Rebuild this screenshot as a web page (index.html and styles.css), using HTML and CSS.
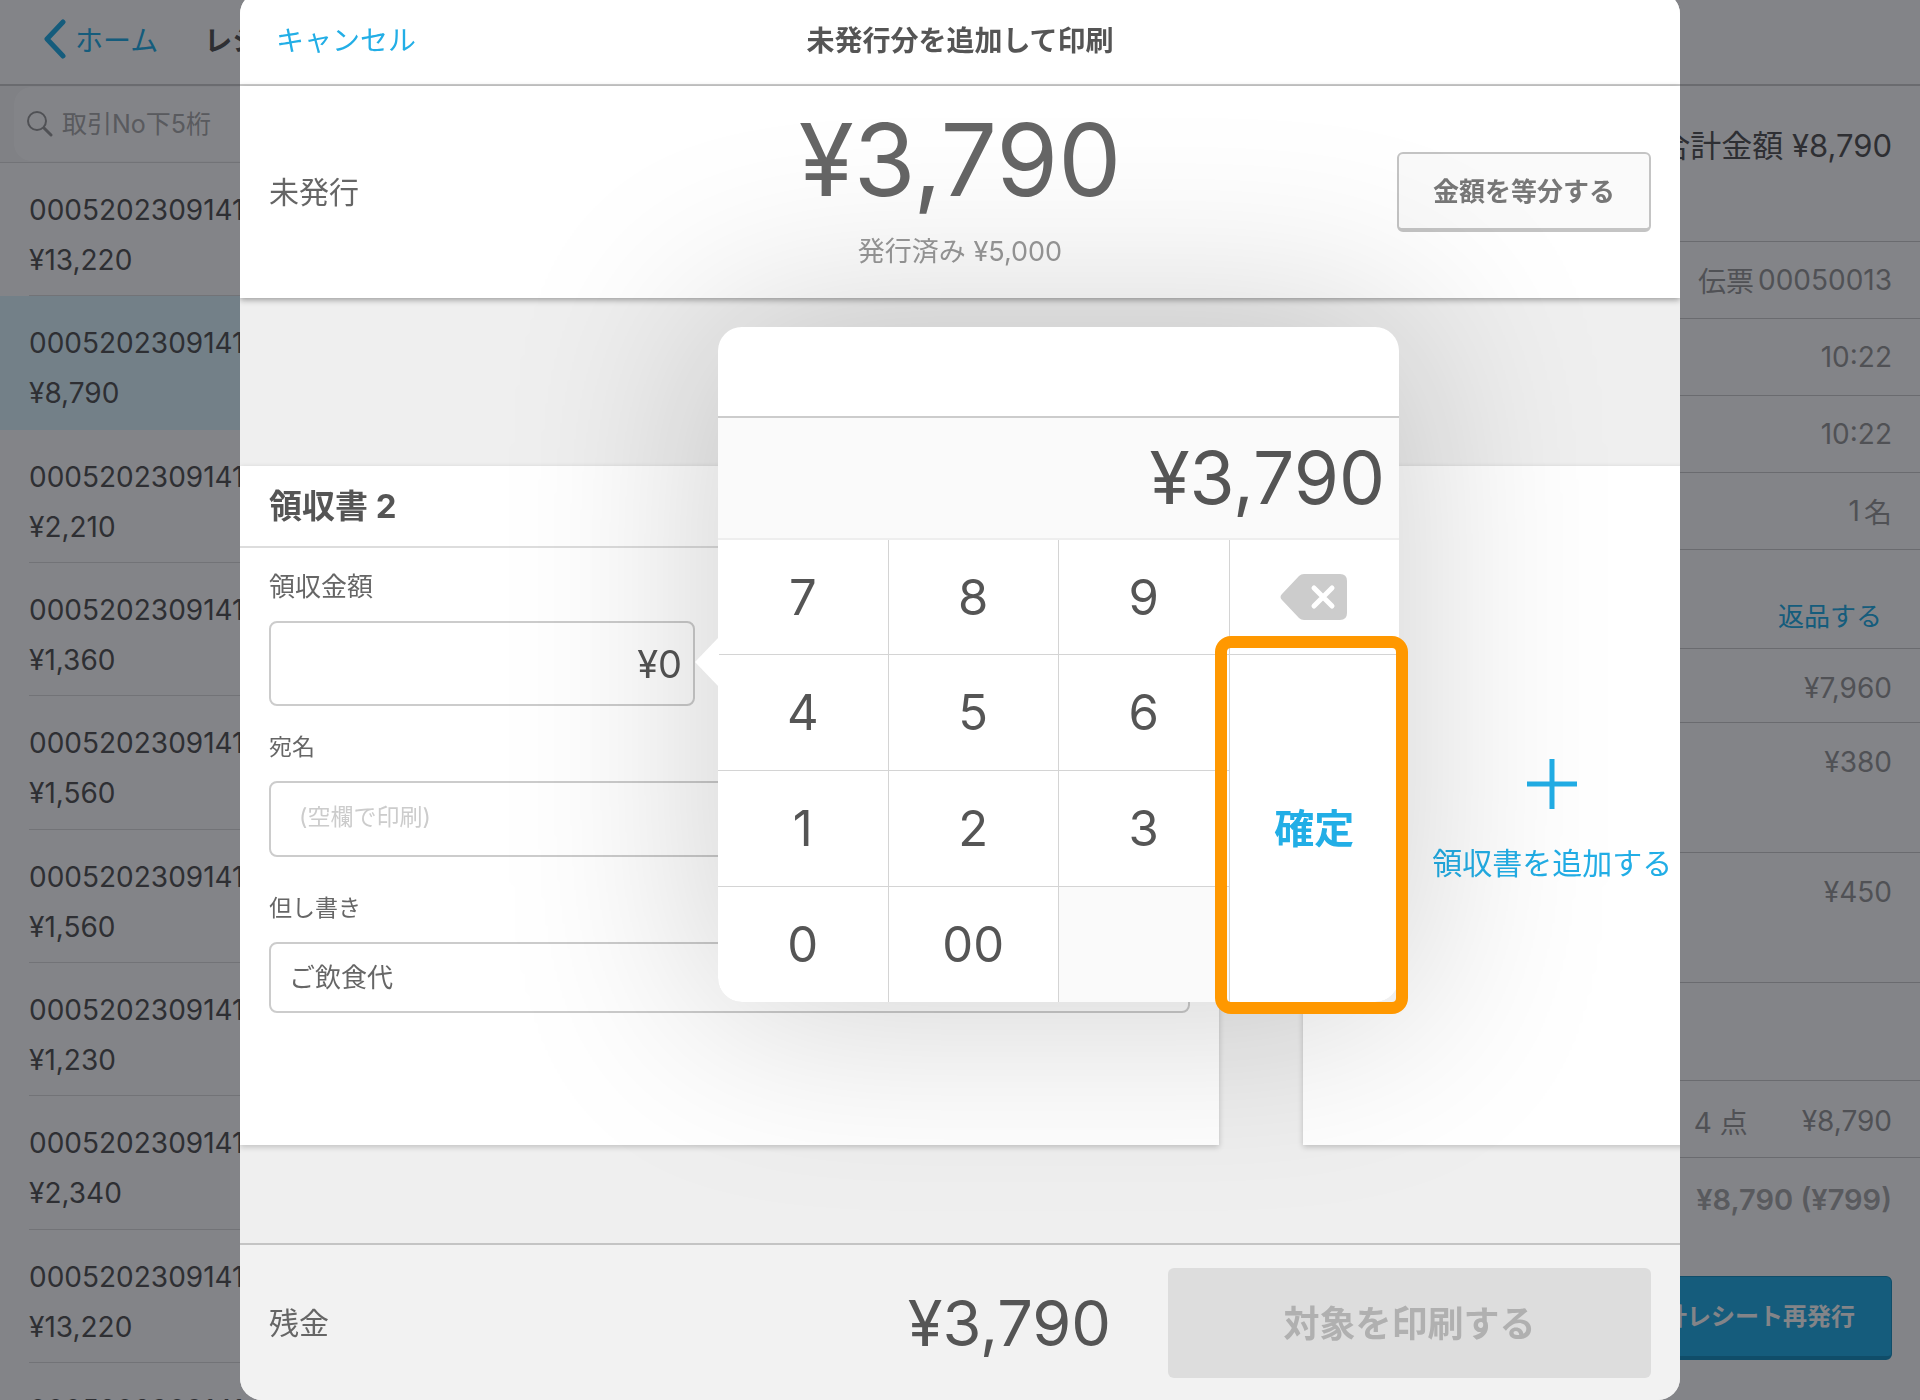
FILE: index.html
```html
<!DOCTYPE html>
<html lang="ja">
<head>
<meta charset="UTF-8" />
<title>未発行分を追加して印刷</title>
<meta name="viewport" content="width=device-width, initial-scale=1.0" />
<link rel="stylesheet" href="styles.css">
</head>
<body>

<div class="app">
  <header class="app-header">
    <a class="home-link" href="#">
      <svg width="24" height="40" viewBox="0 0 24 40" fill="none" stroke="currentColor" stroke-width="5" stroke-linecap="round" stroke-linejoin="round"><path d="M20 3 L4 20 L20 37"/></svg>
      ホーム
    </a>
    <h1>レシート</h1>
  </header>

  <div class="app-main">
    <aside class="sidebar">
      <div class="search-bar">
        <label class="search">
          <svg width="26" height="26" viewBox="0 0 26 26" fill="none" stroke="currentColor" stroke-width="2" stroke-linecap="round"><circle cx="10" cy="10" r="9"/><path d="M17 17 L24 24" stroke-width="3"/></svg>
          <input type="search" placeholder="取引No下5桁" aria-label="取引No下5桁">
        </label>
      </div>
      <ul class="receipts">
        <li>0005202309141<br>¥13,220</li>
        <li class="selected">0005202309141<br>¥8,790</li>
        <li>0005202309141<br>¥2,210</li>
        <li>0005202309141<br>¥1,360</li>
        <li>0005202309141<br>¥1,560</li>
        <li>0005202309141<br>¥1,560</li>
        <li>0005202309141<br>¥1,230</li>
        <li>0005202309141<br>¥2,340</li>
        <li>0005202309141<br>¥13,220</li>
        <li>0005202309141</li>
      </ul>
    </aside>

    <section class="detail">
      <div class="row total">合計金額 ¥8,790</div>
      <div class="row slip"><span>伝票</span><span>00050013</span></div>
      <div class="row">10:22</div>
      <div class="row">10:22</div>
      <div class="row slip"><span>1</span><span>名</span></div>
      <div class="row return"><a href="#">返品する</a></div>
      <div class="row item">¥7,960</div>
      <div class="row item tall">¥380</div>
      <div class="row item tall">¥450</div>
      <div class="row blank"></div>
      <div class="row count"><span>4 点</span><span>¥8,790</span></div>
      <div class="row sum">¥8,790 (¥799)</div>
      <button class="reissue" type="button">会計レシート再発行</button>
    </section>
  </div>
</div>

<div class="backdrop"></div>

<div class="modal" role="dialog" aria-labelledby="modal-title">
  <header class="modal-header">
    <button class="cancel" type="button">キャンセル</button>
    <h2 id="modal-title">未発行分を追加して印刷</h2>
  </header>

  <section class="summary">
    <span class="caption">未発行</span>
    <div class="unissued">
      <strong>¥3,790</strong>
      <span>発行済み ¥5,000</span>
    </div>
    <button class="split" type="button">金額を等分する</button>
  </section>

  <div class="cards">
    <section class="card">
      <h3>領収書 2</h3>
      <form class="fields">
        <div class="field amount">
          <label for="amount">領収金額</label>
          <div class="amount-box">
            <input id="amount" type="text" value="¥0" readonly>

            <!-- テンキー -->
            <div class="keypad">
              <div class="keypad-head"></div>
              <output class="keypad-display" for="amount">¥3,790</output>
              <div class="keys">
                <button type="button">7</button>
                <button type="button">8</button>
                <button type="button">9</button>
                <button type="button" aria-label="削除">
                  <svg width="68" height="48" viewBox="0 0 68 48"><path d="M24 1 H60 Q67 1 67 8 V40 Q67 47 60 47 H24 Q21 47 19 45 L2 27 Q-1 24 2 21 L19 3 Q21 1 24 1 Z" fill="#ccc"/><path d="M34 15 L52 33 M52 15 L34 33" stroke="#fff" stroke-width="5" stroke-linecap="round"/></svg>
                </button>
                <button type="button">4</button>
                <button type="button">5</button>
                <button type="button">6</button>
                <button class="confirm" type="button">確定</button>
                <button type="button">1</button>
                <button type="button">2</button>
                <button type="button">3</button>
                <button type="button">0</button>
                <button type="button">00</button>
                <span class="empty"></span>
              </div>
              <div class="highlight"></div>
            </div>
          </div>
        </div>
        <div class="field name">
          <label for="name">宛名</label>
          <input id="name" type="text" placeholder="(空欄で印刷)">
        </div>
        <div class="field note">
          <label for="note">但し書き</label>
          <input id="note" type="text" value="ご飲食代">
        </div>
      </form>
    </section>

    <button class="card add" type="button">
      <svg width="50" height="50" viewBox="0 0 50 50" stroke="currentColor" stroke-width="5"><path d="M25 0 V50 M0 25 H50"/></svg>
      領収書を追加する
    </button>
  </div>

  <footer class="modal-footer">
    <span class="caption">残金</span>
    <strong>¥3,790</strong>
    <button class="print" type="button" disabled>対象を印刷する</button>
  </footer>
</div>

</body>
</html>
```
FILE: styles.css
```css
* {
  box-sizing: border-box;
}
body {
  margin: 0;
  height: 100vh;
  overflow: hidden;
  background: #fff;
  color: #555;
  font-family: Inter, "Noto Sans CJK JP", sans-serif;
  font-size: 28px;
}
h1, h2, h3, ul {
  margin: 0;
  padding: 0;
}
button, input {
  font-family: inherit;
  color: inherit;
}
button {
  border: none;
  background: none;
  padding: 0;
  cursor: pointer;
}
a {
  color: #22aee6;
  text-decoration: none;
}

/* 取引一覧 */
.app {
  height: 100vh;
  overflow: hidden;
}
.app-header {
  display: flex;
  align-items: center;
  gap: 46px;
  height: 86px;
  padding: 0 0 6px 43px;
  border-bottom: 2px solid #ccc;
}
.app-header h1 {
  font-size: 28px;
}
.home-link {
  display: flex;
  align-items: center;
  gap: 8px;
}
.app-main {
  display: grid;
  grid-template-columns: 36% 1fr;
}
.search-bar {
  height: 77px;
  padding: 1px 14px;
  background: #f8f8f8;
  border-bottom: 1px solid #ddd;
}
.search {
  display: flex;
  align-items: center;
  gap: 7px;
  height: 74px;
  padding: 0 13px;
  border-radius: 18px;
  background: #fff;
  color: #999;
}
.search input {
  flex: 1;
  border: none;
  outline: none;
  background: none;
  font-size: 25px;
}
.search input::placeholder {
  color: #aaa;
  opacity: 1;
}
.receipts {
  display: grid;
  grid-template-rows: repeat(9, 1fr) 133px;
  height: 1333px;
  list-style: none;
  line-height: 50px;
}
.receipts li {
  position: relative;
  padding: 22px 0 0 29px;
}
.receipts li::after {
  content: "";
  position: absolute;
  left: 29px;
  right: 0;
  bottom: 0;
  height: 1px;
  background: #ddd;
}
.receipts .selected {
  background: #dff7ff;
}
.receipts .selected::after {
  display: none;
}

/* 会計詳細 */
.detail {
  text-align: right;
  color: #999;
}
.row {
  display: flex;
  align-items: center;
  justify-content: flex-end;
  height: 77px;
  padding: 0 28px;
  border-bottom: 1px solid #ccc;
}
.row.total {
  height: 156px;
  padding-bottom: 40px;
  font-size: 31px;
  color: #555;
}
.row.slip {
  gap: 4px;
}
.row.return {
  height: 99px;
  padding: 30px 38px 0 0;
  font-size: 26px;
}
.row.item {
  height: 74px;
  padding-top: 4px;
}
.row.item.tall {
  height: 130px;
  padding-bottom: 56px;
}
.row.blank {
  height: 98px;
}
.row.count {
  gap: 54px;
  padding-top: 4px;
}
.row.sum {
  border: none;
  padding-top: 6px;
  font-weight: 600;
  font-size: 29px;
  color: #aaa;
}
.reissue {
  margin: 41px 28px 0 0;
  padding: 0 36px 4px;
  height: 84px;
  border: 1px solid #1890c0;
  border-bottom-width: 4px;
  border-radius: 6px;
  background: #22aee6;
  color: #fff;
  font-size: 24px;
  font-weight: 600;
}

.backdrop {
  position: fixed;
  inset: 0;
  background: rgba(7, 9, 17, 0.5);
}

/* モーダル */
.modal {
  position: fixed;
  top: -8px;
  bottom: 0;
  left: 12.5%;
  right: 12.5%;
  display: flex;
  flex-direction: column;
  overflow: hidden;
  border-radius: 22px;
  background: #efefef;
}
.modal-header {
  display: grid;
  grid-template-columns: 1fr auto 1fr;
  align-items: center;
  height: 94px;
  padding: 2px 36px 0;
  border-bottom: 2px solid #ccc;
  background: #fff;
}
.modal-header h2 {
  font-size: 28px;
  font-weight: 600;
}
.cancel {
  justify-self: start;
  color: #22aee6;
  font-size: 28px;
}
.caption {
  padding-bottom: 4px;
  font-size: 30px;
  color: #666;
}
.summary {
  position: relative;
  display: grid;
  grid-template-columns: 1fr auto 1fr;
  align-items: center;
  height: 212px;
  padding: 0 29px;
  background: #fff;
  box-shadow: 0 2px 6px rgba(0, 0, 0, 0.35);
}
.unissued {
  display: flex;
  flex-direction: column;
  align-items: center;
  gap: 22px;
  padding-bottom: 3px;
  color: #999;
  font-size: 27px;
  line-height: 40px;
}
.unissued strong {
  color: #666;
  font-size: 100px;
  font-weight: 400;
  line-height: 100px;
}
.split {
  justify-self: end;
  height: 80px;
  padding: 0 34px 3px;
  border: 2px solid #c4c4c4;
  border-bottom-width: 4px;
  border-radius: 6px;
  background: #fafafa;
  color: #777;
  font-size: 26px;
  font-weight: 600;
}

.cards {
  position: relative;
  flex: 1;
  display: flex;
  gap: 84px;
  padding: 168px 0 98px;
}
.card {
  flex: 0 0 68%;
  background: #fff;
  box-shadow: 0 2px 6px rgba(0, 0, 0, 0.2);
}
.card.add {
  flex: 0 0 498px;
  display: flex;
  flex-direction: column;
  align-items: center;
  justify-content: center;
  gap: 30px;
  padding-top: 31px;
  color: #22aee6;
  font-size: 30px;
}
.card h3 {
  padding-left: 29px;
  border-bottom: 2px solid #ddd;
  font-size: 33px;
  line-height: 80px;
}
.fields {
  padding: 19px 29px;
}
.field label {
  display: block;
  margin-bottom: 14px;
  color: #666;
  font-size: 23px;
  line-height: 40px;
}
.field input {
  display: block;
  width: 100%;
  border: 2px solid #ccc;
  border-radius: 8px;
  outline: none;
  background: none;
}
.field.amount label {
  font-size: 26px;
}
.amount-box {
  position: relative;
  width: 46%;
  min-width: 426px;
}
.field.amount input {
  height: 85px;
  padding: 0 11px;
  font-size: 38px;
  text-align: right;
}
.field.name {
  margin-top: 21px;
}
.field.name input {
  height: 76px;
  padding: 0 28px 5px;
  font-size: 23px;
}
.field.name input::placeholder {
  color: #ccc;
  opacity: 1;
}
.field.note {
  margin-top: 31px;
}
.field.note input {
  height: 71px;
  padding: 0 18px 4px;
  color: #666;
  font-size: 26px;
}

/* テンキー */
.keypad {
  position: absolute;
  z-index: 10;
  left: calc(100% + 23px);
  top: -294px;
  width: 681px;
  border-radius: 24px;
  background: #fff;
  box-shadow: 0 0 200px 16px rgba(0, 0, 0, 0.18);
}
.keypad::before {
  content: "";
  position: absolute;
  left: -23px;
  top: 310px;
  width: 24px;
  height: 50px;
  background: #fff;
  clip-path: polygon(0 50%, 100% 0, 100% 100%);
}
.keypad-head {
  height: 91px;
  border-bottom: 2px solid #ccc;
}
.keypad-display {
  display: block;
  height: 122px;
  padding-right: 14px;
  border-bottom: 2px solid #eee;
  background: #fafafa;
  font-size: 73px;
  line-height: 120px;
  text-align: right;
}
.keys {
  display: grid;
  grid-template-columns: repeat(4, 1fr);
  grid-template-rows: 114px repeat(3, 115px);
  gap: 1px;
  overflow: hidden;
  border-radius: 0 0 24px 24px;
  background: #d4d4d4;
}
.keys button {
  display: flex;
  align-items: center;
  justify-content: center;
  background: #fff;
  font-size: 49px;
}
.keys .confirm {
  grid-row: 2 / 5;
  grid-column: 4;
  padding-bottom: 6px;
  color: #22aee6;
  font-size: 40px;
  font-weight: 700;
}
.keys .empty {
  background: #fafafa;
}
.highlight {
  position: absolute;
  right: -9px;
  bottom: -12px;
  width: 193px;
  height: 378px;
  border: 12px solid #ff9800;
  border-radius: 16px;
  pointer-events: none;
}

.modal-footer {
  display: grid;
  grid-template-columns: 1fr auto 483px;
  gap: 57px;
  align-items: center;
  height: 157px;
  padding: 0 29px;
  border-top: 2px solid #c4c4c4;
  background: #f2f2f2;
}
.modal-footer strong {
  font-size: 63px;
  font-weight: 400;
}
.print {
  height: 110px;
  padding-bottom: 4px;
  border-radius: 6px;
  background: #ddd;
  color: #b0b0b0;
  font-size: 36px;
  font-weight: 600;
}
```
